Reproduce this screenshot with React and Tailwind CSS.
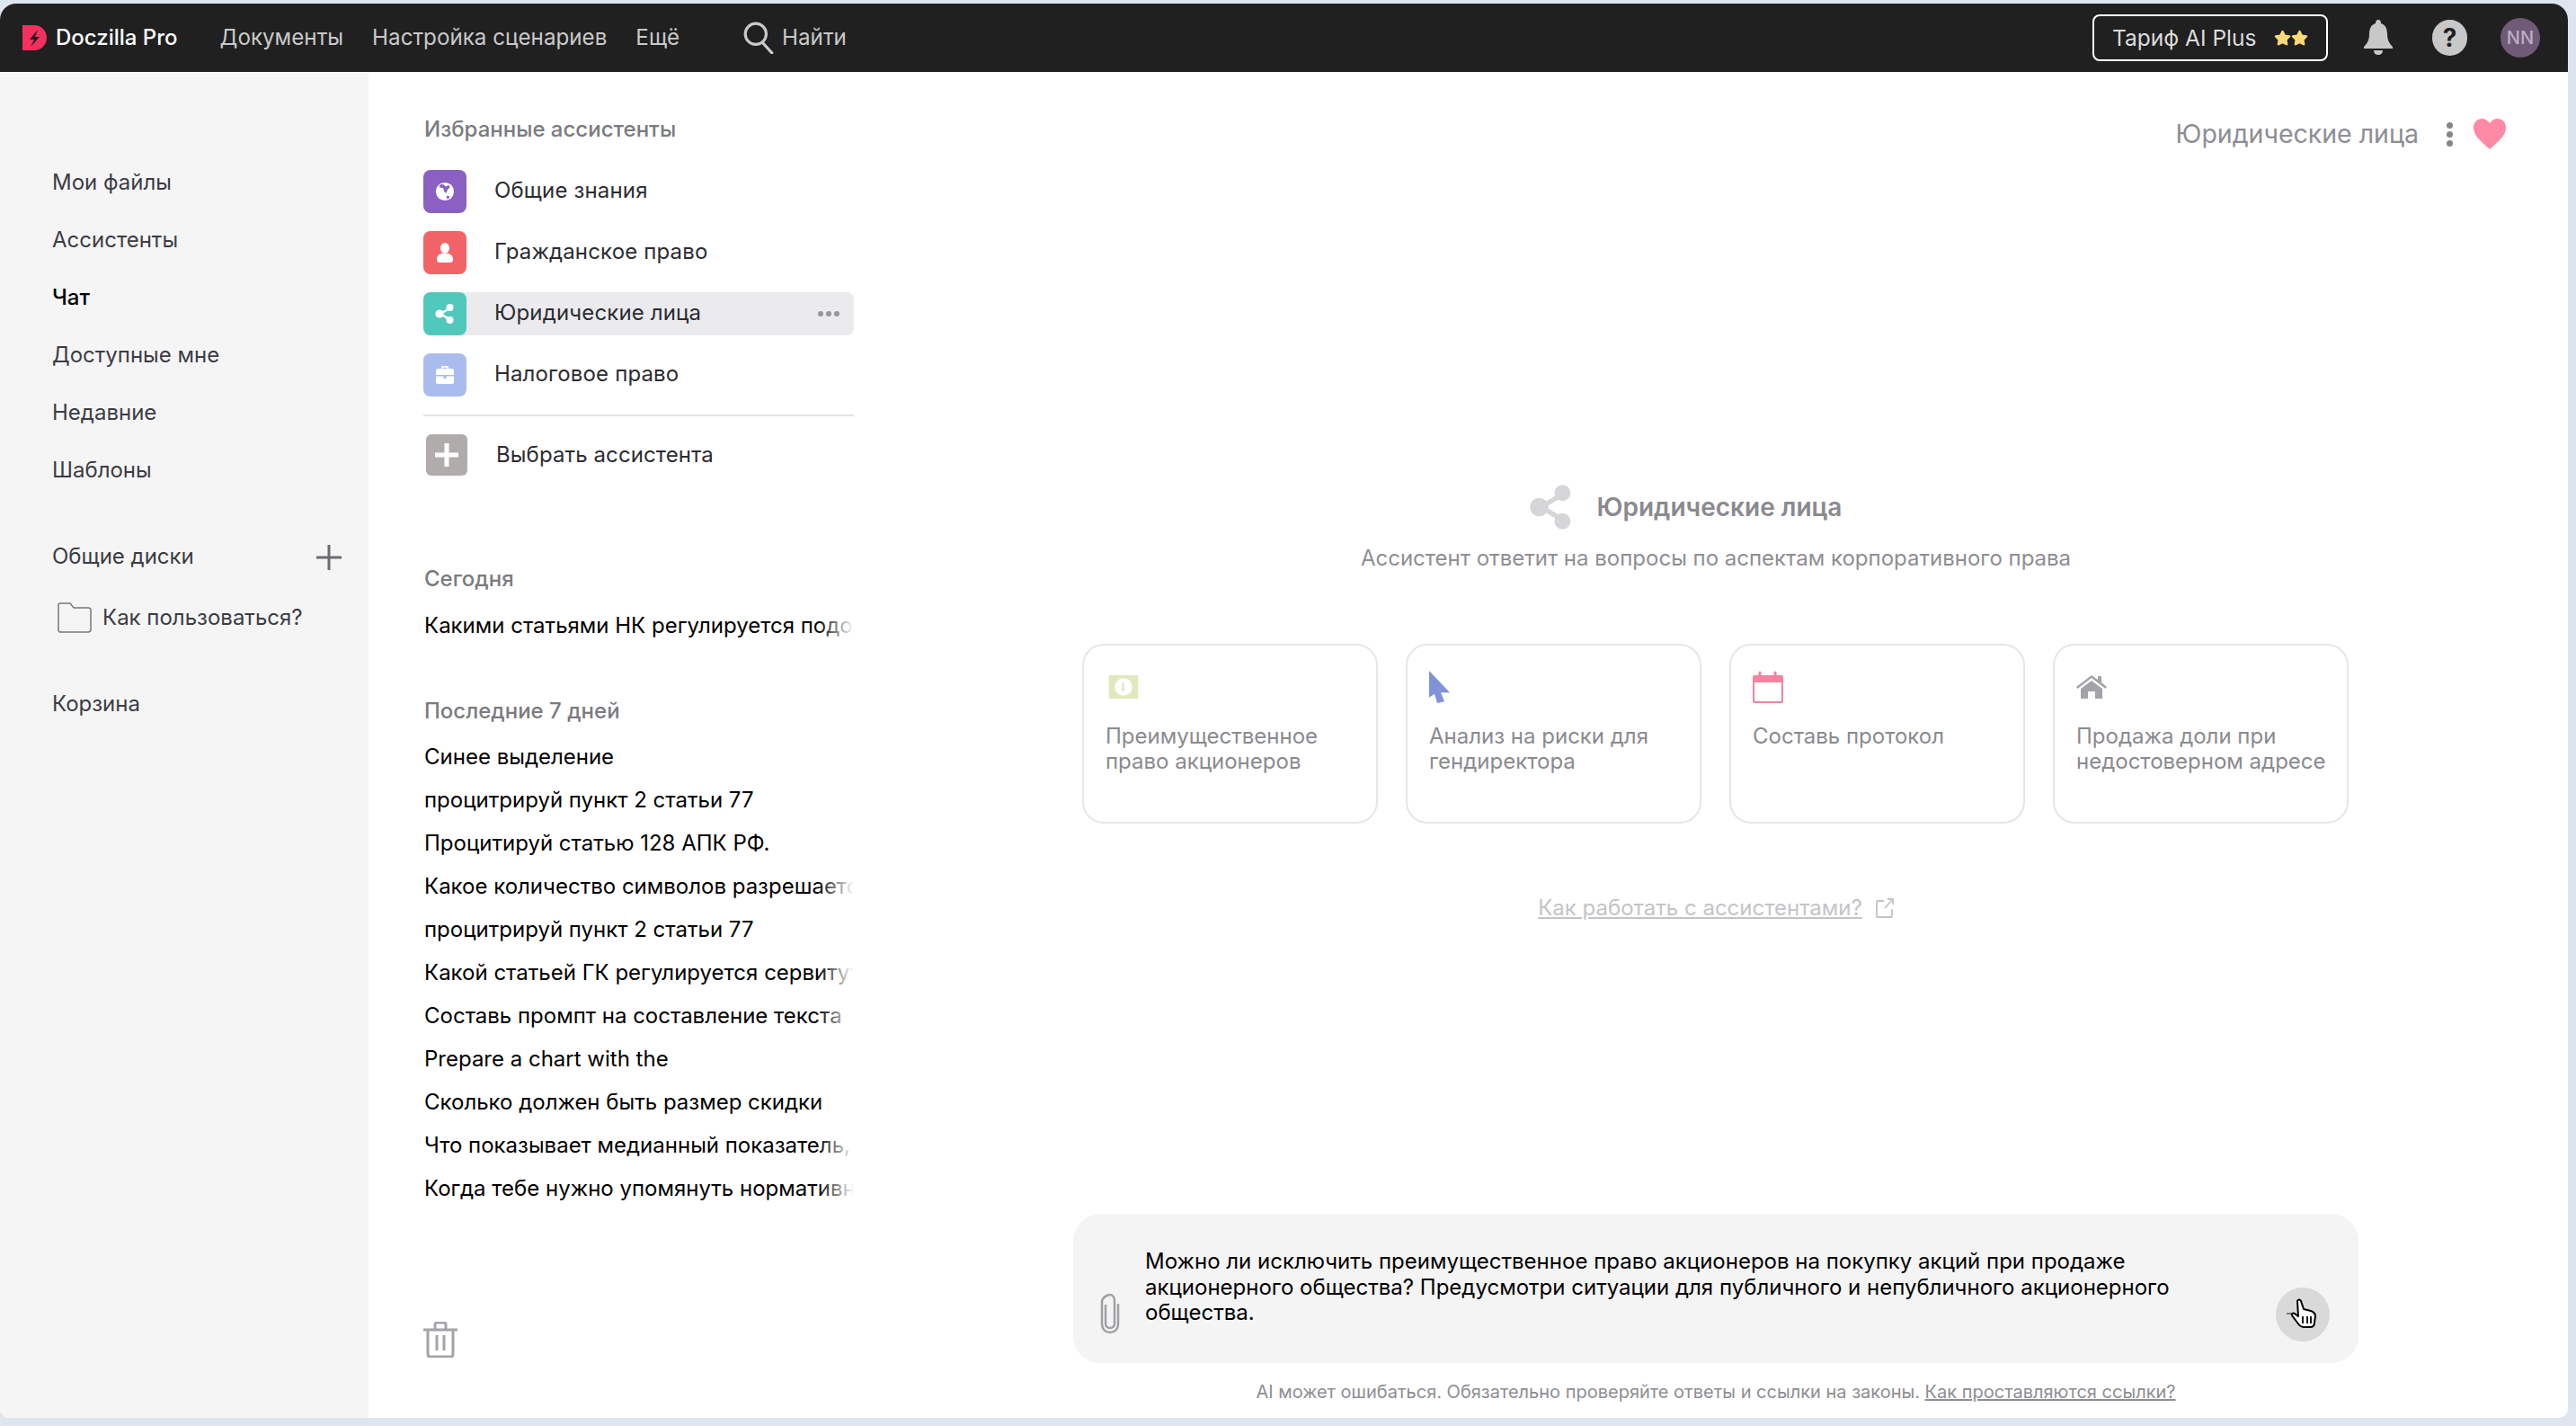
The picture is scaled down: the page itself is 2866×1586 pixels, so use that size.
import React from 'react';
import { Star } from 'lucide-react';

const font = { fontFamily: 'Inter, "Noto Sans", sans-serif' };

const navLinks = ['Мои файлы', 'Ассистенты', 'Чат', 'Доступные мне', 'Недавние', 'Шаблоны'];

const recentChats = [
  'Синее выделение',
  'процитрируй пункт 2 статьи 77',
  'Процитируй статью 128 АПК РФ.',
  'Какое количество символов разрешается использовать',
  'процитрируй пункт 2 статьи 77',
  'Какой статьей ГК регулируется сервитут земельного участка',
  'Составь промпт на составление текста',
  'Prepare a chart with the',
  'Сколько должен быть размер скидки',
  'Что показывает медианный показатель, и зачем он нужен',
  'Когда тебе нужно упомянуть нормативный акт в ответе',
];

const ShareIcon = ({ className }) => (
  <svg viewBox="0 0 24 24" className={className} fill="currentColor">
    <path d="M17 6 7 12l10 6" fill="none" stroke="currentColor" strokeWidth="2.4" />
    <circle cx="17.5" cy="5" r="4" />
    <circle cx="6" cy="12" r="4.6" />
    <circle cx="17.5" cy="19" r="4" />
  </svg>
);

const GlobeIcon = () => (
  <svg viewBox="0 0 24 24" className="w-[22px] h-[22px]">
    <circle cx="12" cy="12" r="11" fill="#fff" />
    <path d="M5 5c2-2 5-2 6-1l2 2 4-2 1 3-3 3-1 4-3-2-1-4-4-1zM14 17l4 1-2 3-2-1z" fill="#8a60c2" />
  </svg>
);

const PersonIcon = () => (
  <svg viewBox="0 0 24 24" className="w-6 h-6" fill="#fff">
    <ellipse cx="12" cy="7" rx="5" ry="6" />
    <path d="M3 19c0-4 4-6 6-6h6c2 0 6 2 6 6 0 3-1 4-3 4H6c-2 0-3-1-3-4z" />
  </svg>
);

const BriefcaseIcon = () => (
  <svg viewBox="0 0 24 24" className="w-6 h-6" fill="#fff">
    <path d="M8 5V3.500C8 2.700 8.700 2 9.500 2h5c.8 0 1.500.7 1.500 1.500V5h-1.700V3.700H9.700V5z" />
    <path d="M2 7.500C2 6.100 3 5 4.500 5h15C21 5 22 6.100 22 7.500V12H2z" />
    <path d="M2 13.500h8.500V16h3v-2.500H22V20c0 1.200-1 2-2.500 2h-15C3 22 2 21.200 2 20z" />
  </svg>
);

function App() {
  return (
    <div style={font} className="w-full h-[1586px] bg-[#dde5ef] pt-1 pr-[9px] pb-[9px] overflow-hidden">
      <div className="h-full flex flex-col bg-white rounded-t-[18px] rounded-b-[10px] overflow-hidden">
        <header className="h-[76px] shrink-0 bg-[#202020] flex items-center pl-[25px] pr-[31px] text-[24.200px] text-[#c9c9c9]">
          <svg viewBox="0 0 27 28" className="w-[27px] h-[28px] shrink-0">
            <path d="M0 0h12a14 14 0 0 1 15 14 14 14 0 0 1-15 14H0z" fill="#f5305f" />
            <path d="M17 5 8 16h5l-4 8 10-11h-5z" fill="#202020" />
          </svg>
          <span className="ml-[10px] text-[24px] font-medium text-white whitespace-nowrap">Doczilla Pro</span>
          <span className="ml-[47px] whitespace-nowrap">Документы</span>
          <span className="ml-[32px] whitespace-nowrap">Настройка сценариев</span>
          <span className="ml-[32px] whitespace-nowrap">Ещё</span>
          <svg viewBox="0 0 34 34" className="ml-[70px] w-[36px] h-[36px]" fill="none" stroke="#c9c9c9" strokeWidth="3">
            <circle cx="14" cy="13" r="11" />
            <path d="m21 22 10 11" strokeLinecap="round" />
          </svg>
          <span className="ml-2 whitespace-nowrap">Найти</span>

          <div className="ml-auto flex items-center">
            <div className="w-[262px] h-[52px] rounded-lg border-2 border-white flex items-center pl-5 text-[24.500px] text-[#dcdcdc]">
              <span className="whitespace-nowrap">Тариф AI Plus</span>
              <div className="ml-5 flex">
                <Star className="w-[19px] h-[19px] text-[#ffd976]" fill="currentColor" />
                <Star className="w-[19px] h-[19px] text-[#ffd976]" fill="currentColor" />
              </div>
            </div>
            <svg viewBox="0 0 32 40" className="ml-10 w-[32px] h-[40px]" fill="#c8c8c8">
              <path d="M16 0c2 0 3 1.500 3 4 5 1.500 7 6 7 12 0 6 2 10 6 14v2H0v-2c4-4 6-8 6-14 0-6 2-10.500 7-12 0-2.500 1-4 3-4z" />
              <path d="M11 34h10c0 3-2 5-5 5s-5-2-5-5z" />
            </svg>
            <div className="ml-[44px] w-[39px] h-10 rounded-full bg-[#c8c8c8] flex items-center justify-center text-[#202020] text-[28px] font-bold leading-none">?</div>
            <div className="ml-[37px] w-11 h-11 rounded-full bg-[#6f5a78] flex items-center justify-center text-[#bcaec4] text-[20px] font-medium">NN</div>
          </div>
        </header>

        <div className="flex-1 flex min-h-0">
          <aside className="w-[410px] shrink-0 bg-[#f5f5f6] pt-[91px] pl-[58px] pr-[30px] text-[24px] text-[#3c3c43]">
            {navLinks.map((link) => (
              <div key={link} className={`h-16 flex items-center whitespace-nowrap ${link === 'Чат' ? 'text-black font-medium' : ''}`}>{link}</div>
            ))}
            <div className="mt-8 h-16 flex items-center justify-between">
              <span className="whitespace-nowrap">Общие диски</span>
              <svg viewBox="0 0 28 28" className="w-7 h-7 mt-[2px]" stroke="#6b6b72" strokeWidth="3">
                <path d="M14 0v28M0 14h28" />
              </svg>
            </div>
            <div className="h-[72px] flex items-center">
              <svg viewBox="0 0 38 34" className="ml-[6px] w-[38px] h-[34px]" fill="none" stroke="#77777c" strokeWidth="1.500">
                <path d="M1 3c0-1 1-2 2-2h11l4 5h16c2 0 3 1 3 2v22c0 2-1 3-3 3H3c-1 0-2-1-2-3z" />
              </svg>
              <span className="ml-[12px] whitespace-nowrap">Как пользоваться?</span>
            </div>
            <div className="mt-[28px] h-16 flex items-center">Корзина</div>
          </aside>

          <section className="w-[540px] shrink-0 pl-[61px] flex flex-col text-[24px]">
            <div className="mt-[48px] h-8 pl-px flex items-center text-[#7b7b80] font-medium">Избранные ассистенты</div>
            <div className="mt-[29px] flex flex-col gap-5 text-[#2c2c32] tracking-[0.15px]">
              <div className="h-12 flex items-center">
                <div className="w-12 h-12 rounded-lg bg-[#8a60c2] flex items-center justify-center"><GlobeIcon /></div>
                <span className="ml-[31px] -mt-[2px]">Общие знания</span>
              </div>
              <div className="h-12 flex items-center">
                <div className="w-12 h-12 rounded-lg bg-[#f26368] flex items-center justify-center"><PersonIcon /></div>
                <span className="ml-[31px] -mt-[2px]">Гражданское право</span>
              </div>
              <div className="h-12 flex items-center bg-[#ebebee] rounded-lg pr-4">
                <div className="w-12 h-12 rounded-lg bg-[#51c8bc] flex items-center justify-center"><ShareIcon className="w-6 h-6 text-white" /></div>
                <span className="ml-[31px] -mt-[2px]">Юридические лица</span>
                <div className="ml-auto flex gap-[3px]">
                  <span className="w-[6px] h-[6px] rounded-full bg-[#97979d]" />
                  <span className="w-[6px] h-[6px] rounded-full bg-[#97979d]" />
                  <span className="w-[6px] h-[6px] rounded-full bg-[#97979d]" />
                </div>
              </div>
              <div className="h-12 flex items-center">
                <div className="w-12 h-12 rounded-lg bg-[#aabced] flex items-center justify-center"><BriefcaseIcon /></div>
                <span className="ml-[31px] -mt-[2px]">Налоговое право</span>
              </div>
            </div>
            <div className="mt-5 border-t-2 border-[#e2e2e6]" />
            <div className="mt-5 h-[46px] flex items-center">
              <div className="ml-[3px] w-[46px] h-[46px] rounded-md bg-[#b0acac] flex items-center justify-center">
                <svg viewBox="0 0 28 28" className="w-7 h-7" stroke="#fff" strokeWidth="5"><path d="M14 1v26M1 14h26" /></svg>
              </div>
              <span className="ml-8 text-[#2c2c32] tracking-[0.1px]">Выбрать ассистента</span>
            </div>

            <div className="mt-[99px] h-8 pl-px flex items-center text-[#7b7b80] font-medium">Сегодня</div>
            <ChatRow className="mt-3" title="Какими статьями НК регулируется подоходный налог" />
            <div className="mt-[55px] h-8 pl-px flex items-center text-[#7b7b80] font-medium">Последние 7 дней</div>
            <div className="mt-[11px]">
              {recentChats.map((chat, i) => <ChatRow key={i} title={chat} />)}
            </div>

            <svg viewBox="0 0 38 40" className="mt-auto mb-[67px] w-[38px] h-10 shrink-0" fill="none" stroke="#a3a3a8" strokeWidth="3">
              <path d="M0 9h38M13 8V3c0-1 1-2 2-2h8c1 0 2 1 2 2v5M5 9v27c0 2 1 3 3 3h22c2 0 3-1 3-3V9M15 15v17M23 15v17" />
            </svg>
          </section>

          <main className="flex-1 min-w-0 flex flex-col items-center pl-[11px] pb-[13px]">
            <div className="self-end mt-[45px] h-12 pr-[69px] flex items-center text-[28.500px] text-[#8e8e93]">
              <span className="whitespace-nowrap">Юридические лица</span>
              <div className="ml-[31px] flex flex-col gap-[3px]">
                <span className="w-[7px] h-[7px] rounded-full bg-[#85858b]" />
                <span className="w-[7px] h-[7px] rounded-full bg-[#85858b]" />
                <span className="w-[7px] h-[7px] rounded-full bg-[#85858b]" />
              </div>
              <svg viewBox="0 0 36 34" className="ml-[23px] w-9 h-[34px]" fill="#ff8aa5">
                <path d="M18 34C8 25 0 19 0 10 0 4 4 0 9.500 0 13 0 16 2 18 5c2-3 5-5 8.500-5C32 0 36 4 36 10c0 9-8 15-18 24z" />
              </svg>
            </div>

            <div className="mt-[367px] mr-[70px] h-12 flex items-center gap-6">
              <ShareIcon className="w-[54px] h-[54px] text-[#d6d6d8]" />
              <span className="text-[28px] font-semibold text-[#8a8a8f] whitespace-nowrap">Юридические лица</span>
            </div>
            <div className="mt-[17px] h-8 flex items-center text-[24px] text-[#8e8e93] whitespace-nowrap">Ассистент ответит на вопросы по аспектам корпоративного права</div>

            <div className="mt-[79px] w-[1409px] mr-px grid grid-cols-4 gap-[31px]">
              <PromptCard lines={['Преимущественное', 'право акционеров']}>
                <svg viewBox="0 0 40 32" className="w-10 h-[26px]">
                  <path d="M0 0h40v32H0z" fill="#e0e8bd" />
                  <ellipse cx="20" cy="16" rx="12" ry="12" fill="#fff" />
                  <path d="M18 10h3v12h-3z" fill="#e0e8bd" />
                </svg>
              </PromptCard>
              <PromptCard lines={['Анализ на риски для', 'гендиректора']}>
                <svg viewBox="0 0 24 36" className="w-6 h-9">
                  <path d="M0 0 23 31h-10l4 13-8 2-3-13-6 5z" transform="scale(1 .78)" fill="#7f93d8" />
                </svg>
              </PromptCard>
              <PromptCard lines={['Составь протокол']}>
                <svg viewBox="0 0 34 36" className="w-[34px] h-9" fill="none">
                  <path d="M2 6h30c1 0 1 1 1 1v27c0 1-1 1-1 1H2c-1 0-1-1-1-1V7s0-1 1-1z" stroke="#f4829f" strokeWidth="2" />
                  <path d="M1 6h32v7H1z" fill="#f4829f" />
                  <path d="M8 10V2M25 10V2" stroke="#f4829f" strokeWidth="3" strokeLinecap="round" />
                </svg>
              </PromptCard>
              <PromptCard lines={['Продажа доли при', 'недостоверном адресе']}>
                <svg viewBox="0 0 34 26" className="w-[34px] h-[26px]" fill="#a3a3a8">
                  <path d="M17 0 0 13l1.500 2L17 3l15.500 12 1.500-2-6-5V1h-4v4z" />
                  <path d="M5 15 17 6l12 9v11h-8v-8h-8v8H5z" />
                </svg>
              </PromptCard>
            </div>

            <div className="mt-[78px] h-8 flex items-center text-[24px] text-[#c4c4c7]">
              <span className="underline whitespace-nowrap">Как работать с ассистентами?</span>
              <svg viewBox="0 0 20 22" className="ml-[15px] w-5 h-[22px]" fill="none" stroke="#c4c4c7" strokeWidth="1.800">
                <path d="M9 3H2c-1 0-1 1-1 1v16s0 1 1 1h15s1 0 1-1v-8M10 11l9-10M13 1h6v6" />
              </svg>
            </div>

            <div className="mt-auto w-[1430px] h-[166px] shrink-0 rounded-[30px] bg-[#f4f4f5] flex relative">
              <svg viewBox="0 0 22 46" className="absolute left-[30px] top-[88px] w-[22px] h-[46px]" fill="none" stroke="#a0a0a4" strokeWidth="2.500">
                <path d="M6 13v21c0 3 2 5 5 5s5-2 5-5V9c0-4-2-7-5-7S2 5 2 10v25c0 5 4 9 9 9s9-4 9-9V12" />
              </svg>
              <p className="absolute left-[80px] top-[39px] w-[1180px] text-[24px] leading-[28.500px] text-black">
                Можно ли исключить преимущественное право акционеров на покупку акций при продаже акционерного общества? Предусмотри ситуации для публичного и непубличного акционерного общества.
              </p>
              <div className="absolute left-[1338px] top-[82px] w-[60px] h-[60px] rounded-full bg-[#d9d9d9] flex items-center justify-center">
                <svg viewBox="0 0 36 36" className="w-9 h-9">
                  <path d="M0 17h10" stroke="#7d7d7d" strokeWidth="2" />
                  <path d="M12 3c1-2 3-2 4 0l3 9 8 2c3 1 5 3 5 6l-1 7c0 3-2 5-5 5h-7c-3 0-5-2-7-5l-6-8c-1-2 1-3 3-2l4 3z" fill="#fff" stroke="#000" strokeWidth="2" strokeLinejoin="round" />
                  <path d="M18 20v8M23 20v8M27 20v8" stroke="#000" strokeWidth="1.800" />
                </svg>
              </div>
            </div>

            <div className="mt-4 h-8 flex items-center text-[20px] text-[#8e8e93] whitespace-nowrap">
              AI может ошибаться. Обязательно проверяйте ответы и ссылки на законы.&nbsp;<span className="underline">Как проставляются ссылки?</span>
            </div>
          </main>
        </div>
      </div>
    </div>
  );
}

function ChatRow({ title, className = '' }) {
  return (
    <div className={`relative h-12 pl-px flex items-center overflow-hidden whitespace-nowrap text-black ${className}`}>
      {title}
      <div className="absolute right-0 top-0 bottom-0 w-[40px] bg-gradient-to-l from-white to-transparent" />
    </div>
  );
}

function PromptCard({ lines, children }) {
  return (
    <div className="h-[200px] rounded-3xl border-2 border-[#e6e6e8] pl-[24px] pt-[30px]">
      <div className="h-9 flex items-center -mt-[2px]">{children}</div>
      <div className="mt-[23px] text-[24px] leading-7 text-[#8a8a8f]">
        {lines.map((line) => <div key={line} className="whitespace-nowrap">{line}</div>)}
      </div>
    </div>
  );
}

export default App;
